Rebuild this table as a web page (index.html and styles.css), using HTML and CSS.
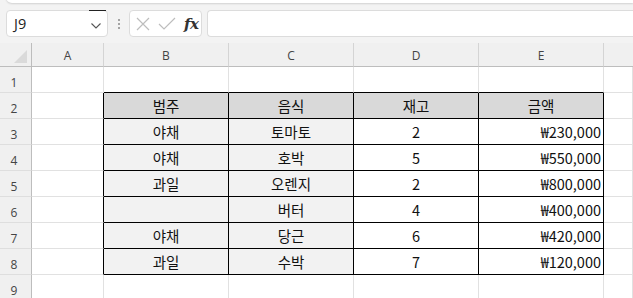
FILE: index.html
```html
<!DOCTYPE html>
<html lang="ko">
<head>
<meta charset="utf-8">
<link rel="stylesheet" href="styles.css">
</head>
<body>
<div class="app">
  <div class="ribbon-edge"></div>
  <div class="fbar">
    <div class="namebox">
      <span class="name">J9</span>
      <span class="namebar"></span>
      <svg class="chev" width="12" height="8" viewBox="0 0 12 8"><path d="M1.5 1.5 L6 6 L10.5 1.5" fill="none" stroke="#555" stroke-width="1.1"/></svg>
    </div>
    <div class="dots"><i></i><i></i><i></i></div>
    <div class="fbtns">
      <svg width="14" height="14" viewBox="0 0 14 14"><path d="M1 1 L13 13 M13 1 L1 13" stroke="#bdbdbd" stroke-width="1.2" fill="none"/></svg>
      <svg width="18" height="14" viewBox="0 0 18 14"><path d="M1 7 L6 12 L17 1" stroke="#bdbdbd" stroke-width="1.2" fill="none"/></svg>
      <span class="fx">fx</span>
    </div>
    <div class="finput"></div>
  </div>
  <div class="sheet">
    <div class="corner"><span class="tri"></span></div>
    <div class="ch">A</div><div class="ch">B</div><div class="ch">C</div><div class="ch">D</div><div class="ch">E</div><div class="ch last"></div>

    <div class="rh">1</div>
    <div class="c"></div><div class="c tb"></div><div class="c tb"></div><div class="c tb"></div><div class="c tb"></div><div class="c"></div>

    <div class="rh">2</div>
    <div class="c tl"></div><div class="c t hd">범주</div><div class="c t hd">음식</div><div class="c t hd">재고</div><div class="c t hd">금액</div><div class="c"></div>

    <div class="rh">3</div>
    <div class="c tl"></div><div class="c t lt">야채</div><div class="c t lt">토마토</div><div class="c t">2</div><div class="c t r">₩230,000</div><div class="c"></div>

    <div class="rh">4</div>
    <div class="c tl"></div><div class="c t lt">야채</div><div class="c t lt">호박</div><div class="c t">5</div><div class="c t r">₩550,000</div><div class="c"></div>

    <div class="rh">5</div>
    <div class="c tl"></div><div class="c t lt">과일</div><div class="c t lt">오렌지</div><div class="c t">2</div><div class="c t r">₩800,000</div><div class="c"></div>

    <div class="rh">6</div>
    <div class="c tl"></div><div class="c t lt"></div><div class="c t lt">버터</div><div class="c t">4</div><div class="c t r">₩400,000</div><div class="c"></div>

    <div class="rh">7</div>
    <div class="c tl"></div><div class="c t lt">야채</div><div class="c t lt">당근</div><div class="c t">6</div><div class="c t r">₩420,000</div><div class="c"></div>

    <div class="rh">8</div>
    <div class="c tl"></div><div class="c t lt">과일</div><div class="c t lt">수박</div><div class="c t">7</div><div class="c t r">₩120,000</div><div class="c"></div>

    <div class="rh">9</div>
    <div class="c"></div><div class="c"></div><div class="c"></div><div class="c"></div><div class="c"></div><div class="c"></div>
  </div>
</div>
</body>
</html>
```
FILE: styles.css
```css
* { box-sizing: border-box; }
html, body { margin: 0; padding: 0; }
body {
  width: 633px;
  height: 298px;
  overflow: hidden;
  background: #f3f3f3;
  font-family: "Noto Sans CJK KR", "Noto Sans", sans-serif;
}
.app { position: relative; width: 633px; height: 298px; overflow: hidden; }
.ribbon-edge {
  position: absolute;
  left: 6px; right: 0; top: -10px;
  height: 13px;
  background: #fff;
  border-radius: 0 0 0 6px;
  box-shadow: 0 1px 2px rgba(0,0,0,0.14);
}
.fbar {
  height: 43px;
  display: flex;
  align-items: flex-start;
  padding: 10px 0 0 6px;
}
.namebox {
  position: relative;
  width: 102px;
  height: 27px;
  background: #fff;
  border: 1px solid #dcdcdc;
  border-radius: 4px;
  display: flex;
  align-items: center;
  padding-left: 7px;
}
.name {
  font-family: "Open Sans", "Noto Sans", sans-serif;
  font-size: 14.5px;
  color: #222;
}
.namebar {
  position: absolute;
  right: 1px; top: -1px;
  width: 17px; height: 1px;
  background: #222;
}
.chev { position: absolute; right: 5px; top: 11px; }
.dots {
  width: 21px;
  height: 27px;
  display: flex;
  flex-direction: column;
  align-items: center;
  justify-content: center;
  gap: 2px;
}
.dots i { display: block; width: 2px; height: 2px; background: #8a8a8a; border-radius: 1px; }
.fbtns {
  width: 73px;
  height: 27px;
  background: #fff;
  border: 1px solid #dcdcdc;
  border-radius: 4px;
  display: flex;
  align-items: center;
  padding-left: 6px;
  gap: 8px;
}
.fx {
  font-family: "DejaVu Serif", "Liberation Serif", serif;
  font-style: italic;
  font-weight: bold;
  font-size: 15px;
  color: #333;
  margin-left: 0;
  letter-spacing: -0.5px;
}
.finput {
  margin-left: 5px;
  flex: 1;
  height: 27px;
  background: #fff;
  border: 1px solid #dcdcdc;
  border-right: none;
  border-radius: 4px 0 0 4px;
}
.sheet {
  display: grid;
  grid-template-columns: 32px 72px 125px 125px 125px 125px 1fr;
  grid-template-rows: 24px repeat(9, 26px);
  background: #fff;
}
.corner {
  position: relative;
  background: #f0f0f0;
  border-right: 1px solid #bdbdbd;
  border-bottom: 1px solid #bdbdbd;
}
.tri {
  position: absolute;
  right: 4px; bottom: 3px;
  width: 0; height: 0;
  border-left: 13px solid transparent;
  border-bottom: 13px solid #dadada;
}
.ch {
  background: #f0f0f0;
  border-right: 1px solid #d4d4d4;
  border-bottom: 1px solid #bdbdbd;
  font-family: "Open Sans", "Noto Sans", sans-serif;
  font-size: 12px;
  color: #444;
  display: flex;
  align-items: center;
  justify-content: center;
  padding-top: 1px;
}
.ch.last { border-right: none; }
.rh {
  background: #f0f0f0;
  border-right: 1px solid #bdbdbd;
  border-bottom: 1px solid #dedede;
  font-family: "Open Sans", "Noto Sans", sans-serif;
  font-size: 12px;
  color: #444;
  display: flex;
  align-items: center;
  justify-content: center;
  padding: 6px 3px 0 0;
}
.c {
  border-right: 1px solid #e1e1e1;
  border-bottom: 1px solid #e1e1e1;
  font-size: 14.5px;
  color: #111;
  display: flex;
  align-items: center;
  justify-content: center;
  white-space: nowrap;
}
.c.tb { border-bottom-color: #000; }
.c.tl { border-right-color: #000; }
.c.t { border-right-color: #000; border-bottom-color: #000; }
.c.hd { background: #d9d9d9; }
.c.lt { background: #f2f2f2; }
.c.r { justify-content: flex-end; padding-right: 2px; }
```
